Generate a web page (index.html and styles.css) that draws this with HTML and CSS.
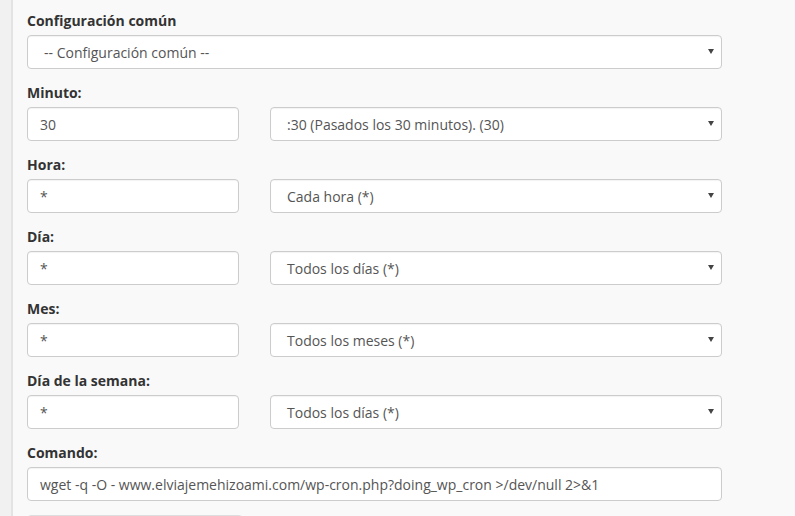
FILE: index.html
```html
<!DOCTYPE html>
<html lang="es">
<head>
    <meta charset="UTF-8">
    <meta name="viewport" content="width=device-width, initial-scale=1.0">
    <title>Cron</title>
    <link rel="stylesheet" href="styles.css">
</head>
<body>
    <div class="layout">
        <div class="sidebar"></div>
        <div class="panel">
            <div class="form-group">
                <label>Configuración común</label>
                <div class="select-box full">-- Configuración común --</div>
            </div>

            <div class="form-group">
                <label>Minuto:</label>
                <div class="pair">
                    <div class="text-box">30</div>
                    <div class="select-box">:30 (Pasados los 30 minutos). (30)</div>
                </div>
            </div>

            <div class="form-group">
                <label>Hora:</label>
                <div class="pair">
                    <div class="text-box">*</div>
                    <div class="select-box">Cada hora (*)</div>
                </div>
            </div>

            <div class="form-group">
                <label>Día:</label>
                <div class="pair">
                    <div class="text-box">*</div>
                    <div class="select-box">Todos los días (*)</div>
                </div>
            </div>

            <div class="form-group">
                <label>Mes:</label>
                <div class="pair">
                    <div class="text-box">*</div>
                    <div class="select-box">Todos los meses (*)</div>
                </div>
            </div>

            <div class="form-group">
                <label>Día de la semana:</label>
                <div class="pair">
                    <div class="text-box">*</div>
                    <div class="select-box">Todos los días (*)</div>
                </div>
            </div>

            <div class="form-group">
                <label>Comando:</label>
                <div class="text-box full">wget -q -O - www.elviajemehizoami.com/wp-cron.php?doing_wp_cron &gt;/dev/null 2&gt;&amp;1</div>
            </div>

            <div class="submit-btn"></div>
        </div>
    </div>
</body>
</html>
```

FILE: styles.css
```css
body {
    margin: 0;
    font-family: 'Open Sans', 'Liberation Sans', sans-serif;
    font-size: 14px;
    color: #333;
    background-color: #f9f9f9;
    overflow: hidden;
}

.layout {
    display: flex;
    height: 516px;
    overflow: hidden;
}

/* Left strip */
.sidebar {
    width: 11px;
    background-color: #f1f1f1;
    border-right: 2px solid #e3e3e3;
    flex-shrink: 0;
}

.panel {
    width: 695px;
    padding: 11px 0 0 14px;
}

/* Form groups */
.form-group {
    margin-bottom: 14px;
}

.form-group label {
    display: block;
    font-weight: bold;
    line-height: 20px;
    margin-bottom: 4px;
    color: #333;
}

.pair {
    display: flex;
    gap: 31px;
}

.text-box,
.select-box {
    box-sizing: border-box;
    height: 34px;
    line-height: 33px;
    padding: 0 12px;
    background-color: #fff;
    border: 1px solid #ccc;
    border-radius: 4px;
    box-shadow: inset 0 1px 1px rgba(0, 0, 0, 0.05);
    color: #555;
    white-space: nowrap;
}

.text-box {
    width: 212px;
    flex-shrink: 0;
}

.select-box {
    position: relative;
    width: 453px;
    padding-left: 16px;
}

.full {
    width: 695px;
}

/* Dropdown arrow */
.select-box::after {
    content: "";
    position: absolute;
    right: 7px;
    top: 13px;
    border-left: 3px solid transparent;
    border-right: 3px solid transparent;
    border-top: 5px solid #444;
}

.submit-btn {
    width: 216px;
    height: 34px;
    border: 1px solid #ddd;
    border-radius: 4px;
    background-color: #f6f6f6;
    box-sizing: border-box;
}
```
